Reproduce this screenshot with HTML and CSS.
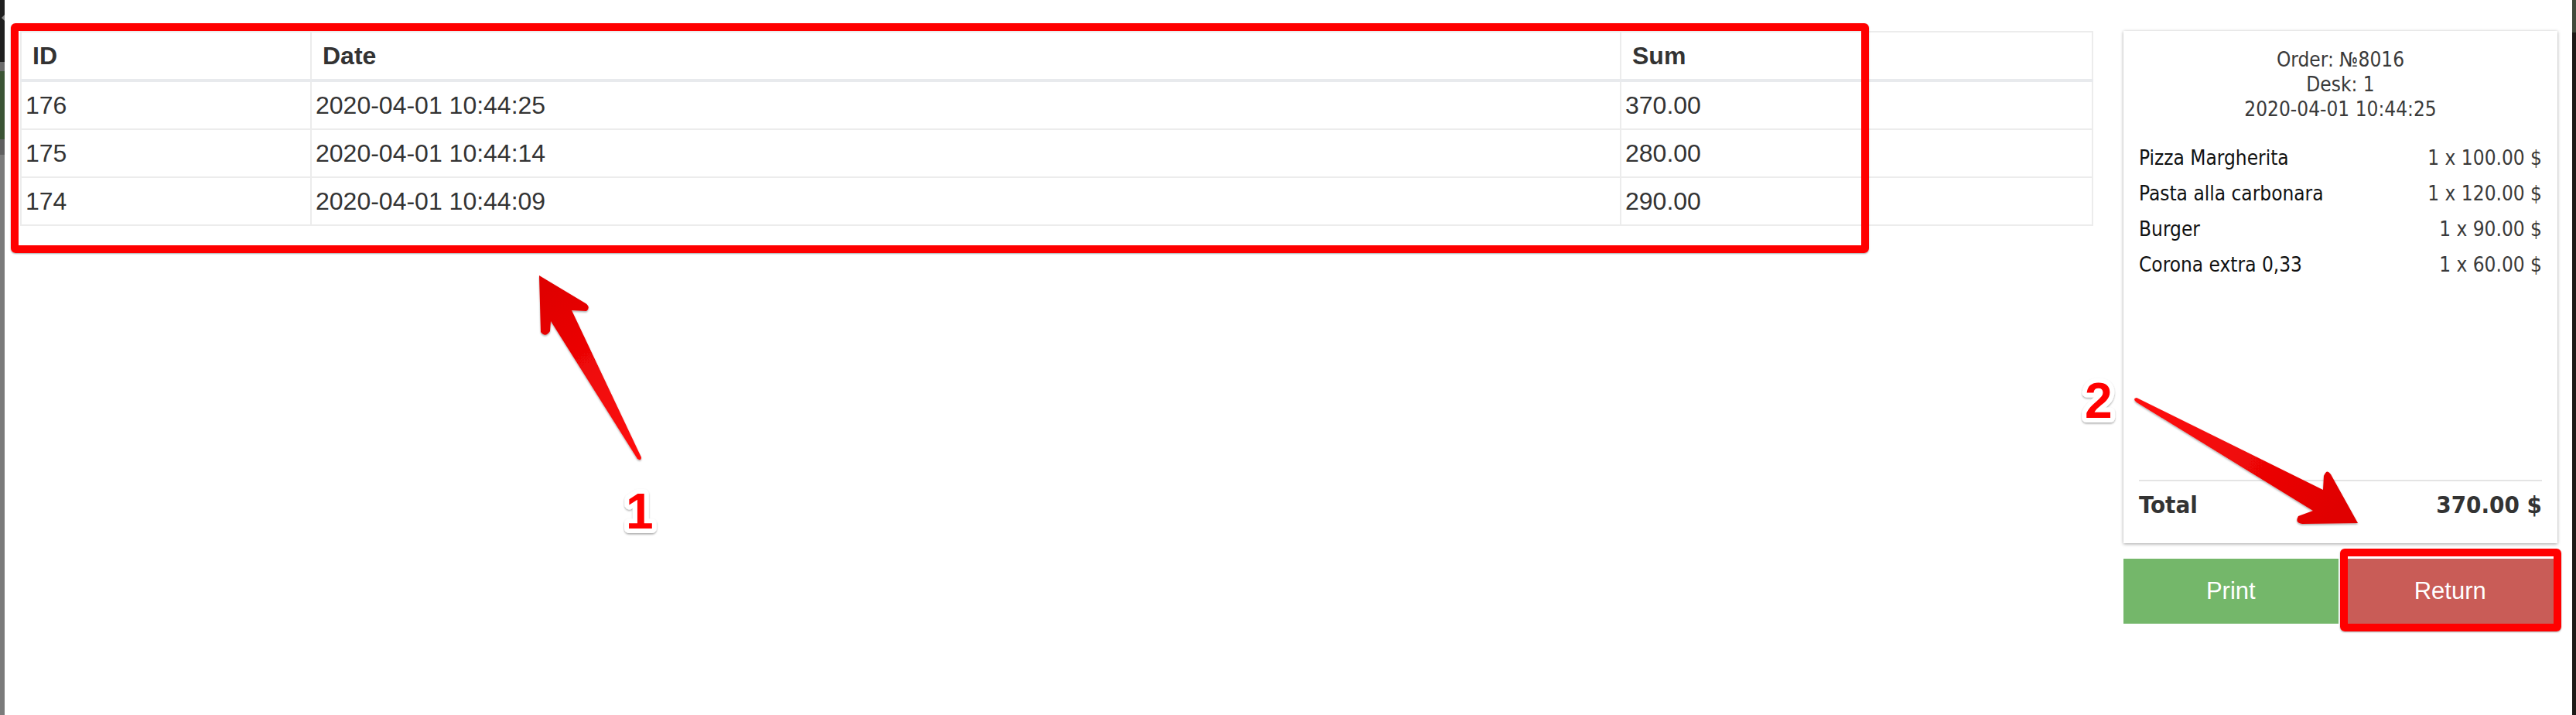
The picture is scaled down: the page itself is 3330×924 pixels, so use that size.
FILE: index.html
```html
<!DOCTYPE html>
<html lang="en">
<head>
<meta charset="utf-8">
<title>Orders</title>
<link rel="stylesheet" href="styles.css">
</head>
<body>
<div class="screen">
  <div class="edge edge-left">
    <div class="seg seg-dark"><span class="collapse-tri"></span></div>
    <div class="seg seg-gray"></div>
    <div class="seg seg-green"></div>
    <div class="seg seg-line"></div>
  </div>

  <main class="content">
    <section class="orders">
      <table class="orders-table">
        <colgroup>
          <col class="col-id">
          <col class="col-date">
          <col class="col-sum">
        </colgroup>
        <thead>
          <tr><th>ID</th><th>Date</th><th>Sum</th></tr>
        </thead>
        <tbody>
          <tr><td>176</td><td>2020-04-01 10:44:25</td><td>370.00</td></tr>
          <tr><td>175</td><td>2020-04-01 10:44:14</td><td>280.00</td></tr>
          <tr><td>174</td><td>2020-04-01 10:44:09</td><td>290.00</td></tr>
        </tbody>
      </table>
    </section>

    <aside class="side">
      <div class="receipt">
        <div class="receipt-head">
          <div>Order: №8016</div>
          <div>Desk: 1</div>
          <div>2020-04-01 10:44:25</div>
        </div>
        <ul class="receipt-items">
          <li><span class="item-name">Pizza Margherita</span><span class="item-price">1 x 100.00 $</span></li>
          <li><span class="item-name">Pasta alla carbonara</span><span class="item-price">1 x 120.00 $</span></li>
          <li><span class="item-name">Burger</span><span class="item-price">1 x 90.00 $</span></li>
          <li><span class="item-name">Corona extra 0,33</span><span class="item-price">1 x 60.00 $</span></li>
        </ul>
        <div class="receipt-total"><span>Total</span><span>370.00 $</span></div>
      </div>
      <div class="actions">
        <button class="btn btn-print">Print</button>
        <button class="btn btn-return">Return</button>
      </div>
    </aside>
  </main>

  <div class="edge edge-right"></div>

  <div class="mark mark-table"></div>
  <div class="mark mark-return"></div>

  <svg class="annot" width="3330" height="924" viewBox="0 0 3330 924" xmlns="http://www.w3.org/2000/svg">
    <defs>
      <linearGradient id="g1" gradientUnits="userSpaceOnUse" x1="826" y1="593" x2="700" y2="380">
        <stop offset="0" stop-color="#ff1010"/>
        <stop offset="1" stop-color="#e00000"/>
      </linearGradient>
      <linearGradient id="g2" gradientUnits="userSpaceOnUse" x1="2760" y1="517" x2="3020" y2="660">
        <stop offset="0" stop-color="#ff1010"/>
        <stop offset="1" stop-color="#e00000"/>
      </linearGradient>
      <filter id="sh" x="-20%" y="-20%" width="140%" height="140%">
        <feDropShadow dx="0" dy="1.5" stdDeviation="1.2" flood-color="#000" flood-opacity="0.35"/>
      </filter>
    </defs>
    <path class="arrow" fill="url(#g1)" d="M697 356 L757 392 Q764 397 758 402 L739 401 L829 591 Q829 596 824 593 L712 415 L711 428 Q705 437 699 429 Z"/>
    <path class="arrow" fill="url(#g2)" d="M3048 676 L2976 677 Q2966 676 2971 667 L2990 660 L2762 520 Q2756 515 2762 514 L3003 633 L3004 615 Q3008 605 3013 613 Z"/>
    <text class="num" x="809" y="683">1</text>
    <text class="num" x="2695" y="540">2</text>
  </svg>
</div>
</body>
</html>
```

FILE: styles.css
```css
* { box-sizing: border-box; }

html, body {
  margin: 0;
  padding: 0;
  background: #ffffff;
}

body {
  font-family: "Liberation Sans", Arial, Helvetica, sans-serif;
  color: #333333;
}

.screen {
  position: relative;
  display: flex;
  width: 3330px;
  height: 924px;
  overflow: hidden;
  background: #ffffff;
}

/* window edges */
.edge { flex: none; }

.edge-left {
  width: 6px;
  display: flex;
  flex-direction: column;
  background: #7b7b7b;
}

.seg-dark {
  height: 80px;
  background: #1f1f1f;
  display: flex;
  align-items: flex-start;
  justify-content: flex-end;
  padding-top: 19px;
}

.collapse-tri {
  width: 0;
  height: 0;
  border-top: 4px solid transparent;
  border-bottom: 4px solid transparent;
  border-right: 4px solid #8a8a8a;
}

.seg-gray { height: 12px; background: #6c6c6c; }
.seg-green { height: 88px; background: #3b5434; }
.seg-line { height: 20px; background: #5f5f5f; }

.edge-right {
  width: 5px;
  background: linear-gradient(#414a3b 0 42px, #1d1a17 42px);
}

/* main layout */
.content {
  flex: 1;
  display: flex;
  align-items: flex-start;
  gap: 39px;
  padding: 40px 19px 0 20px;
}

.orders { flex: 1; min-width: 0; }

.orders-table {
  width: 100%;
  table-layout: fixed;
  border-collapse: collapse;
  font-size: 32px;
  color: #333333;
}

.col-id { width: 375px; }
.col-date { width: 1693px; }

.orders-table th,
.orders-table td {
  border: 2px solid #ececec;
  line-height: 60px;
  height: 60px;
  text-align: left;
  vertical-align: middle;
  white-space: nowrap;
}

.orders-table th {
  font-weight: bold;
  padding: 0 14px;
  border-bottom: 4px solid #e8eaed;
}

.orders-table td {
  font-weight: normal;
  padding: 0 5px;
}

/* receipt */
.side {
  width: 561px;
  flex: none;
}

.receipt {
  height: 662px;
  display: flex;
  flex-direction: column;
  padding: 0 20px;
  background: #ffffff;
  box-shadow: 0 1px 4px rgba(0, 0, 0, 0.38);
  font-family: "DejaVu Sans Condensed", "DejaVu Sans", Verdana, sans-serif;
  font-stretch: condensed;
  font-size: 26px;
}

.receipt-head {
  padding-top: 21px;
  text-align: center;
  line-height: 32px;
  color: #3a3a3a;
}

.receipt-items {
  list-style: none;
  margin: 24px 0 0;
  padding: 0;
}

.receipt-items li {
  display: flex;
  justify-content: space-between;
  line-height: 46px;
}

.item-name { color: #111111; }
.item-price { color: #3a3a3a; }

.receipt-total {
  margin-top: auto;
  display: flex;
  justify-content: space-between;
  border-top: 2px solid #e4e4e4;
  padding: 10px 0 30px;
  line-height: 40px;
  font-size: 31px;
  font-weight: bold;
  color: #333333;
}

.actions {
  display: grid;
  grid-template-columns: 1fr 1fr;
  gap: 6px;
  margin-top: 20px;
}

.btn {
  height: 84px;
  border: 0;
  border-radius: 0;
  margin: 0;
  padding: 0;
  color: #ffffff;
  font-family: "Liberation Sans", Arial, Helvetica, sans-serif;
  font-size: 31px;
  cursor: pointer;
}

.btn-print { background: #74b76a; }
.btn-return { background: #c95c57; }

/* annotation overlay */
.mark {
  position: absolute;
  border: 10px solid #ff0000;
  border-radius: 6px;
  box-shadow: 0 1px 2px rgba(0, 0, 0, 0.35);
  pointer-events: none;
}

.mark-table {
  left: 14px;
  top: 30px;
  width: 2402px;
  height: 297px;
}

.mark-return {
  left: 3025px;
  top: 709px;
  width: 286px;
  height: 107px;
}

.annot {
  position: absolute;
  left: 0;
  top: 0;
  pointer-events: none;
}

.arrow { filter: url(#sh); }

.num {
  font-family: "Liberation Sans", Arial, sans-serif;
  font-weight: bold;
  font-size: 64px;
  fill: #ff0000;
  stroke: #ffffff;
  stroke-width: 12px;
  stroke-linejoin: round;
  paint-order: stroke fill;
  filter: url(#sh);
}
```
